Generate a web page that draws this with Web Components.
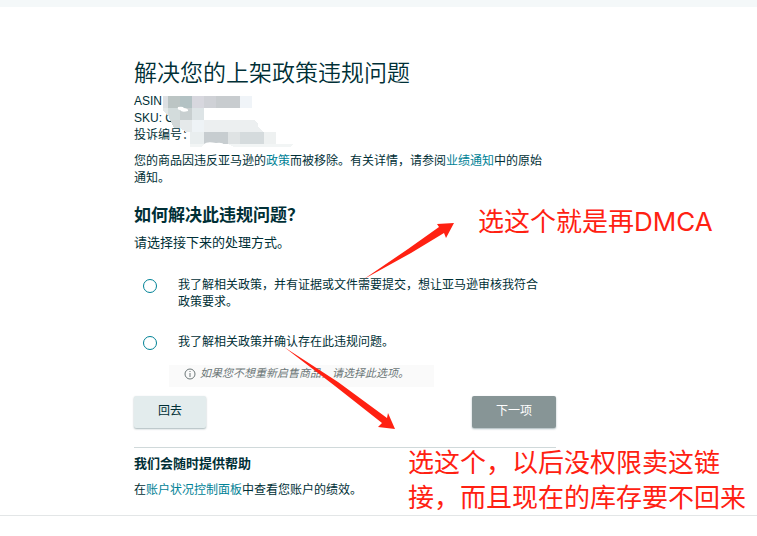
<!DOCTYPE html>
<html lang="zh-CN">
<head>
<meta charset="utf-8">
<meta name="viewport" content="width=device-width, initial-scale=1">
<title>解决您的上架政策违规问题</title>
<style>
  body {
    margin: 0;
    background: #ffffff;
    color: #002f36;
    font: 12px/17px "Liberation Sans", "Noto Sans CJK SC", sans-serif;
  }
</style>
</head>
<body>
<appeal-page>
  <listing-summary slot="main"></listing-summary>
  <resolve-form slot="main"></resolve-form>
  <help-block slot="main"></help-block>
  <markup-layer slot="overlay"></markup-layer>
</appeal-page>

<script>
  const linkStyles = `
    a {
      color: #008296;
      text-decoration: none;
    }

    a:hover {
      text-decoration: underline;
    }
  `;

  class AppealPage extends HTMLElement {
    constructor() {
      super();
      this.attachShadow({ mode: 'open' });
      this.shadowRoot.innerHTML = `
        <style>
          :host {
            display: block;
            position: relative;
          }

          .bar {
            height: 7px;
            background: #f4f8f9;
          }

          .body {
            padding: 52px 16px 16px;
            border-bottom: 1px solid #e3e6e7;
          }

          main {
            max-width: 422px;
            margin: 0 auto;
            padding-right: 67px;
          }
        </style>
        <div class="bar"></div>
        <div class="body">
          <main><slot name="main"></slot></main>
        </div>
        <slot name="overlay"></slot>
      `;
    }
  }

  class ListingSummary extends HTMLElement {
    constructor() {
      super();
      this.attachShadow({ mode: 'open' });
      this.shadowRoot.innerHTML = `
        <style>
          :host {
            display: block;
          }

          h1 {
            margin: 0;
            font-size: 23px;
            line-height: 28px;
            font-weight: 350;
          }

          .ids {
            position: relative;
            margin-top: 6px;
          }

          p {
            margin: 9px 0 0;
            padding-right: 12px;
          }

          ${linkStyles}
        </style>
        <h1>解决您的上架政策违规问题</h1>
        <div class="ids">
          <div>ASIN</div>
          <div>SKU: C</div>
          <div>投诉编号：</div>
          <redacted-ids></redacted-ids>
        </div>
        <p>您的商品因违反亚马逊的<a href="#policy">政策</a>而被移除。有关详情，请参阅<a href="#notice">业绩通知</a>中的原始通知。</p>
      `;
    }
  }

  // 12px tiles covering the identifiers
  class RedactedIds extends HTMLElement {
    constructor() {
      super();
      this.attachShadow({ mode: 'open' });
      this.shadowRoot.innerHTML = `
        <style>
          :host {
            position: absolute;
            top: 3px;
            left: 28px;
            line-height: 0;
          }
        </style>
        <svg width="132" height="52" viewBox="162 96 132 52" aria-hidden="true" shape-rendering="crispEdges">
          <path fill="#dcdfe2" d="M163 96h5v12h-5z"/>
          <path fill="#bcc5c4" d="M168 96h12v12h-12z"/>
          <path fill="#b3c2c4" d="M180 96h12v12h-12z"/>
          <path fill="#d7d7de" d="M192 96h12v12h-12z"/>
          <path fill="#cfd1d6" d="M204 96h12v12h-12z"/>
          <path fill="#c8cccf" d="M216 96h24v12h-24z"/>
          <path fill="#f0f4f8" d="M240 96h12v12h-12z"/>
          <path fill="#e3e8e8" d="M163 108h5v7l-5-4z"/>
          <path fill="#d3dcdc" d="M168 108h12v12h-10l-2-5z"/>
          <path fill="#c8cfd0" d="M180 108h12v12h-12z"/>
          <path fill="#dde4e6" d="M192 108h12v12h-12z"/>
          <path fill="#ffffff" shape-rendering="auto" d="M178 107q5-1 6 1q5 1 4 3q-6 2-8-1q-3 0-2-3z"/>
          <path fill="#d2d7d7" d="M170 120h10v8h-6z"/>
          <path fill="#e5e9ea" d="M180 120h12v12h-6l-6-4z"/>
          <path fill="#eef3f6" d="M192 120h12v12h-12z"/>
          <path fill="#eceff0" d="M204 120h50l4 4v3l6 5h-60z"/>
          <path fill="#e9eeef" d="M190 132h14v12h-14z"/>
          <path fill="#c7cdd0" d="M204 132h24v12h-24z"/>
          <path fill="#dfe3e4" d="M228 132h12v12h-12z"/>
          <path fill="#d5dbdd" d="M240 132h24v12h-24z"/>
          <path fill="#eef1f1" d="M264 132h12v12h-12z"/>
          <path fill="#ffffff" shape-rendering="auto" d="M204 144q3-3 12-1q7-1 8 2h-20z"/>
          <path fill="#f2f5f5" d="M190 144h14l-3 3h-11zM228 144h66l-4 3h-56z"/>
        </svg>
      `;
    }
  }

  class InfoHint extends HTMLElement {
    constructor() {
      super();
      this.attachShadow({ mode: 'open' });
      this.shadowRoot.innerHTML = `
        <style>
          :host {
            display: flex;
            align-items: center;
            gap: 4px;
            box-sizing: border-box;
            max-width: 265px;
            height: 22px;
            padding: 0 15px 5px;
            background: #fafafa;
            color: #6c7778;
            font-size: 11px;
            line-height: 17px;
            font-style: italic;
          }

          svg {
            flex: none;
          }
        </style>
        <svg width="12" height="12" viewBox="0 0 12 12" fill="none" stroke="currentColor" aria-hidden="true">
          <circle cx="6" cy="6" r="5"/>
          <path d="M6 5v4M6 3v1"/>
        </svg>
        <span><slot></slot></span>
      `;
    }
  }

  class ResolveForm extends HTMLElement {
    constructor() {
      super();
      this.attachShadow({ mode: 'open' });
      this.shadowRoot.innerHTML = `
        <style>
          :host {
            display: block;
            margin-top: 19px;
          }

          h2 {
            margin: 0;
            font-size: 17px;
            line-height: 20px;
          }

          .lead {
            margin: 8px 0 0;
            font-size: 13px;
          }

          .option {
            display: flex;
            gap: 21px;
            margin-top: 23px;
            padding: 0 12px 0 9px;
          }

          .option:first-of-type {
            margin-top: 26px;
          }

          input {
            appearance: none;
            flex: none;
            box-sizing: border-box;
            width: 14px;
            height: 14px;
            margin: 2px 0 0;
            border: 1px solid #008296;
            border-radius: 50%;
            background: #ffffff;
          }

          input:checked {
            border-width: 4px;
          }

          info-hint {
            margin: 14px 0 0 35px;
          }

          .actions {
            display: flex;
            justify-content: space-between;
            margin-top: 9px;
          }

          button {
            height: 32px;
            padding: 0 24px 2px;
            border: 0;
            border-radius: 2px;
            box-shadow: 0 1px 2px rgba(0, 47, 54, 0.35);
            background: #e3eced;
            color: #002f36;
            font: inherit;
          }

          button.primary {
            background: #879596;
            color: #ffffff;
          }
        </style>
        <form>
          <h2>如何解决此违规问题？</h2>
          <p class="lead">请选择接下来的处理方式。</p>
          <div class="option">
            <input type="radio" name="resolution" id="dispute">
            <label for="dispute">我了解相关政策，并有证据或文件需要提交，想让亚马逊审核我符合政策要求。</label>
          </div>
          <div class="option">
            <input type="radio" name="resolution" id="accept">
            <label for="accept">我了解相关政策并确认存在此违规问题。</label>
          </div>
          <info-hint>如果您不想重新启售商品，请选择此选项。</info-hint>
          <div class="actions">
            <button type="button">回去</button>
            <button type="button" class="primary">下一项</button>
          </div>
        </form>
      `;
    }
  }

  class HelpBlock extends HTMLElement {
    constructor() {
      super();
      this.attachShadow({ mode: 'open' });
      this.shadowRoot.innerHTML = `
        <style>
          :host {
            display: block;
            margin-top: 19px;
            padding-top: 7px;
            border-top: 1px solid #d0d9da;
          }

          h3 {
            margin: 0;
            font-size: 13px;
            line-height: 17px;
          }

          p {
            margin: 10px 0 0;
          }

          ${linkStyles}
        </style>
        <h3>我们会随时提供帮助</h3>
        <p>在<a href="#health">账户状况控制面板</a>中查看您账户的绩效。</p>
      `;
    }
  }

  // red arrows and notes drawn over the page
  class MarkupLayer extends HTMLElement {
    constructor() {
      super();
      this.attachShadow({ mode: 'open' });
      this.shadowRoot.innerHTML = `
        <style>
          :host {
            position: absolute;
            top: 0;
            left: 0;
            color: #ff2112;
            font: 26px/35px Inter, "Noto Sans CJK SC", sans-serif;
            pointer-events: none;
          }

          svg {
            display: block;
          }

          .note {
            position: absolute;
            white-space: nowrap;
          }

          .dispute {
            top: 204px;
            left: 478px;
          }

          .accept {
            top: 445px;
            left: 408px;
          }
        </style>
        <svg width="757" height="536" viewBox="0 0 757 536" fill="currentColor" aria-hidden="true">
          <path d="M364 279L408 249L439 227L437 224L454 223L446 238L444 233L411 253Z"/>
          <path d="M284 347L338 382L387 418L388 413L395 429L378 427L382 423L335 386Z"/>
        </svg>
        <div class="note dispute">选这个就是再DMCA</div>
        <div class="note accept">选这个，以后没权限卖这链<br>接，而且现在的库存要不回来</div>
      `;
    }
  }

  customElements.define('appeal-page', AppealPage);
  customElements.define('redacted-ids', RedactedIds);
  customElements.define('listing-summary', ListingSummary);
  customElements.define('info-hint', InfoHint);
  customElements.define('resolve-form', ResolveForm);
  customElements.define('help-block', HelpBlock);
  customElements.define('markup-layer', MarkupLayer);
</script>
</body>
</html>
